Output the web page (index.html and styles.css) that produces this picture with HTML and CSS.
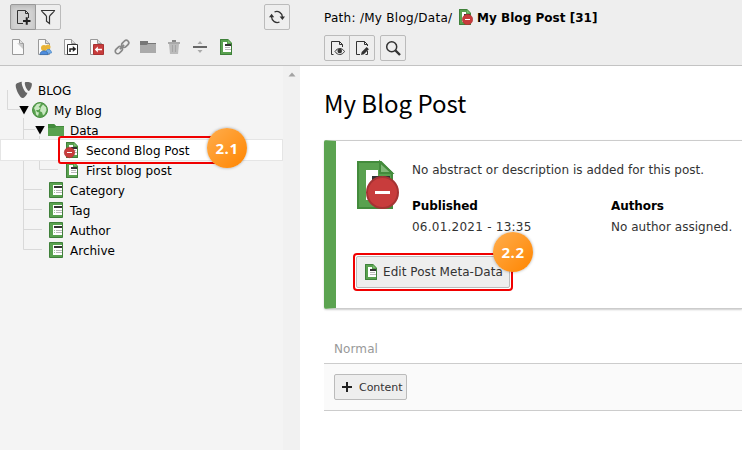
FILE: index.html
```html
<!DOCTYPE html>
<html lang="en">
<head>
<meta charset="utf-8">
<title>My Blog Post</title>
<link rel="stylesheet" href="styles.css">
</head>
<body>
<svg class="defs" width="0" height="0">
  <defs>
    <symbol id="post" viewBox="0 0 16 16">
      <path fill="#59a14f" d="M2 0h8l4 4v12H2z"/>
      <path fill="none" stroke="#3f803a" d="M2.500.5h7.300l3.700 3.700v11.300h-11z"/>
      <path fill="#7dbd72" d="M10 1v3h3z"/>
      <path fill="#fff" d="M5 3h4v2h4v8H5z"/>
      <path fill="#333" d="M7 5h6v2H7z"/>
      <path fill="#b9b9b9" d="M7 8h5v1H7zM7 10h6v1H7z"/>
    </symbol>
    <symbol id="list" viewBox="0 0 16 16">
      <path fill="#59a14f" stroke="#3f803a" d="M1.500.5h13v15h-13z"/>
      <path fill="#fff" d="M5 3h9v10H5z"/>
      <path fill="#333" d="M6 4h8v2H6z"/>
      <path fill="#b9b9b9" d="M8 8h6v1H8zM8 10h6v1H8z"/>
      <path fill="#9cc796" d="M6 8h1v1H6zM6 10h1v1H6z"/>
    </symbol>
    <symbol id="hidden-post" viewBox="0 0 16 16">
      <use href="#post" width="16" height="16"/>
      <circle cx="10.500" cy="10.500" r="5.200" fill="#c83c3c" stroke="#a33"  stroke-width=".6"/>
      <path fill="#fff" d="M8 10h5v1H8z"/>
    </symbol>
    <symbol id="sheet" viewBox="0 0 16 16">
      <path fill="#fafafa" stroke="#999" d="M2.500.5h7l4 4v11h-11z"/>
      <path fill="#ddd" stroke="#999" d="M9.500.5v4h4"/>
    </symbol>
  </defs>
</svg>
<div class="app">
  <aside class="side">
    <header class="bar">
      <div class="bar-row">
        <div class="group">
          <button class="btn active"><svg width="16" height="16" viewBox="0 0 16 16"><path fill="none" stroke="#333" d="M8 14.500H2.500v-13h8l3 3V9M10.500 1.500v3h3"/><path stroke="#222" stroke-width="2" d="M8 12h7.500M11.750 8.200v7.600"/></svg></button>
          <button class="btn"><svg width="16" height="16" viewBox="0 0 16 16"><path fill="none" stroke="#333" stroke-width="1.200" d="M1.500 1.500h13c0 1.500-5 4.500-5 6v7l-3-2.200V7.500c0-1.500-5-4.500-5-6z"/></svg></button>
        </div>
        <button class="btn"><svg width="16" height="16" viewBox="0 0 16 16"><path fill="none" stroke="#333" stroke-width="1.300" d="M5.500 3A5.600 5.600 0 0 1 13.400 8M10.500 13A5.600 5.600 0 0 1 2.600 8"/><path fill="#333" d="M10.600 7.500H16L13.400 11zM0 8.300h5.200L2.600 4.800z"/></svg></button>
      </div>
      <div class="tools">
        <svg viewBox="0 0 16 16"><use href="#sheet"/><path fill="#ccc" d="M7 4l6 6V5z"/></svg>
        <svg viewBox="0 0 16 16"><use href="#sheet"/><circle cx="12" cy="8" r="2.500" fill="#e8b63c"/><path fill="#76aee8" stroke="#3979bd" stroke-width=".6" d="M9 15c0-6 6.500-6 6.500-1z"/><circle cx="8" cy="9" r="3" fill="#e9b436"/><path fill="#4f8dde" stroke="#2f68ae" stroke-width=".7" d="M4 15.600c0-5 8-5 8 0z"/></svg>
        <svg viewBox="0 0 16 16"><use href="#sheet"/><path fill="#fff" stroke="#333" d="M5.500 5.500h10v10h-10z"/><path fill="none" stroke="#222" stroke-width="1.500" d="M8 13v-3h4"/><path fill="#222" d="M10.800 7v6l3.500-3z"/></svg>
        <svg viewBox="0 0 16 16"><use href="#sheet"/><path fill="#c83c3c" stroke="#a93232" d="M5.500 5.500h10v10h-10z"/><path fill="#fff" d="M6.800 10.500l3-3v2.300h4.200v1.400H9.800v2.300z"/></svg>
        <svg viewBox="0 0 16 16"><g fill="none" stroke="#888" stroke-width="1.700" transform="rotate(-45 8 8)"><rect x="-.5" y="5.500" width="8" height="5" rx="2.500"/><rect x="8.500" y="5.500" width="8" height="5" rx="2.500"/><path d="M5 8h6"/></g></svg>
        <svg viewBox="0 0 16 16"><path fill="#aaa" d="M0 2h8v2h8v10H0z"/><path fill="#777" d="M0 2h8v2h8v1H8L6.500 6H0z"/></svg>
        <svg viewBox="0 0 16 16"><path fill="#bbb" d="M3 5h10l-1 10H4z"/><path fill="#aaa" d="M2 3h12v2H2z"/><path fill="#888" d="M6 1h4v2H6z"/><path stroke="#a5a5a5" d="M6.500 6v7M9.500 6v7"/></svg>
        <svg viewBox="0 0 16 16"><path fill="#666" d="M1 7h14v2H1z"/><path fill="#aaa" d="M5.500 5L8 2l2.500 3zM5.500 11L8 14l2.500-3z"/></svg>
        <svg viewBox="0 0 16 16"><use href="#post"/></svg>
      </div>
    </header>
    <div class="side-body">
      <nav class="tree">
        <svg class="lines" width="60" height="190" fill="none" stroke="#d9d9d9"><path d="M7.500 20v19.500H20M23.500 48v131.500H42M23 59.500h12M23 119.500h19M23 139.500h19M23 159.500h19M39.500 66v33.500H58M39 79.500h19"/></svg>
        <div class="row l0"><svg viewBox="0 0 16 16"><path fill="#666" d="M11.500 10.700c-.3.100-.5.100-.7.100-2.100 0-5.100-7.300-5.100-9.700 0-.9.200-1.200.5-1.400C3.600 0 .8.900 0 2.200c-.2.300-.3.700-.3 1.200C-.3 7.200 3.800 16 6.700 16c1.400 0 3.600-2.200 4.800-5.300M10.400 0c2.700 0 5.500.4 5.500 2 0 3.100-2 6.900-3 6.900-1.800 0-4.100-5.100-4.100-7.600 0-1.100.4-1.300 1.600-1.300"/></svg><span>BLOG</span></div>
        <div class="row l1"><i class="caret"></i><svg viewBox="0 0 16 16"><circle cx="8" cy="8" r="7.500" fill="#59a14f" stroke="#488f40"/><path fill="#c9e8c1" d="M2 6l3-4 4-.7-1 2.200L6.500 5l2 1-2 2H4l1 2 2 .5L6 14 4 12.500 3.500 9zM9 5l2-2.500 3 2.700.5 3-2 4-1.500 1-1-3-2-1 .5-2.500z"/></svg><span>My Blog</span></div>
        <div class="row l2"><i class="caret"></i><svg viewBox="0 0 16 16"><path fill="#59a14f" d="M0 2h6l2 2h8v10H0z"/><path fill="#438b3c" d="M0 2h6l2 2h8v1H8L6.500 6H0z"/></svg><span>Data</span></div>
        <div class="row l3 selected"><svg viewBox="0 0 16 16"><use href="#post"/><circle cx="5.500" cy="10.500" r="5.200" fill="#c83c3c" stroke="#a33" stroke-width=".6"/><path fill="#fff" d="M3 10h5v1H3z"/></svg><span>Second Blog Post</span>
          <div class="mark mark-tree"><b class="badge">2.1</b></div>
        </div>
        <div class="row l3"><svg viewBox="0 0 16 16"><use href="#post"/></svg><span class="wide">First blog post</span></div>
        <div class="row l4"><svg viewBox="0 0 16 16"><use href="#list"/></svg><span>Category</span></div>
        <div class="row l4"><svg viewBox="0 0 16 16"><use href="#list"/></svg><span>Tag</span></div>
        <div class="row l4"><svg viewBox="0 0 16 16"><use href="#list"/></svg><span>Author</span></div>
        <div class="row l4"><svg viewBox="0 0 16 16"><use href="#list"/></svg><span>Archive</span></div>
      </nav>
      <div class="scroll"><svg width="8" height="5" viewBox="0 0 8 5"><path fill="#a3a3a3" d="M.5 4.500L4 .5l3.500 4z"/></svg></div>
    </div>
  </aside>
  <main class="main">
    <header class="bar doc">
      <div class="path"><span class="crumb">Path: /My Blog/Data/</span><svg viewBox="0 0 16 16"><use href="#hidden-post"/></svg><strong>My Blog Post [31]</strong></div>
      <div class="actions">
        <div class="group">
          <button class="btn"><svg width="16" height="16" viewBox="0 0 16 16"><path fill="none" stroke="#333" d="M4.500 14.500h-2v-13h8l3 3v2.500M10.500 1.500v3h3"/><path fill="#eee" stroke="#333" d="M6 11.500c2.500-4 7-4 9.500 0-2.500 4-7 4-9.500 0z"/><circle cx="10.750" cy="11" r="2.300" fill="#333"/></svg></button>
          <button class="btn"><svg width="16" height="16" viewBox="0 0 16 16"><path fill="none" stroke="#333" d="M6 14.500H2.500v-13h8l3 3v1.500M10.500 1.500v3h3M13.500 11v3.500h-2"/><path fill="#333" d="M7 15l.7-3 5-5 2.200 2.200-5 5z"/></svg></button>
        </div>
        <button class="btn"><svg width="16" height="16" viewBox="0 0 16 16"><circle cx="6.700" cy="6.700" r="5" fill="none" stroke="#333" stroke-width="1.500"/><path stroke="#333" stroke-width="2.400" d="M10.500 10.500l4.500 4.500"/></svg></button>
      </div>
    </header>
    <section class="content">
      <h1>My Blog Post</h1>
      <article class="card">
        <div class="info">
          <svg class="big" viewBox="0 0 48 48"><path fill="#59a14f" stroke="#438b3c" stroke-width="2" d="M7 1h23l11 11v35H7z"/><path fill="#fff" d="M15 9h12v6h12v24H15z"/><path fill="#333" d="M21 15h18v5H21z"/><path fill="#80b978" stroke="#438b3c" stroke-width="2" d="M29 1v11h12z"/><circle cx="31.500" cy="31.500" r="15.500" fill="#c83c3c" stroke="#a53333" stroke-width="2"/><path fill="#fff" d="M24 30h15v3H24z"/></svg>
          <div class="facts">
            <p class="abstract">No abstract or description is added for this post.</p>
            <dl><div><dt>Published</dt><dd class="date">06.01.2021 - 13:35</dd></div><div><dt>Authors</dt><dd>No author assigned.</dd></div></dl>
          </div>
        </div>
        <div class="edit-wrap">
          <button class="edit"><svg width="16" height="16" viewBox="0 0 16 16"><use href="#post"/></svg><span>Edit Post Meta-Data</span></button>
          <b class="badge">2.2</b>
        </div>
      </article>
      <div class="column-title">Normal</div>
      <div class="column-body"><button class="add"><svg width="10" height="10" viewBox="0 0 10 10"><path fill="#222" d="M4 0h2v4h4v2H6v4H4V6H0V4h4z"/></svg><span>Content</span></button></div>
    </section>
  </main>
</div>
</body>
</html>
```
FILE: styles.css
```css
* { box-sizing: border-box; }
body { margin: 0; width: 742px; height: 450px; overflow: hidden; background: #fff; color: #000; font: 12px/20px Verdana, "DejaVu Sans", sans-serif; letter-spacing: .03px; }
.defs { position: absolute; }
button { font: inherit; letter-spacing: inherit; color: #333; padding: 0; margin: 0; }
svg { display: block; flex: none; overflow: visible; }
.app { display: flex; height: 450px; }
.side { width: 300px; display: flex; flex-direction: column; }
.main { flex: 1; min-width: 0; }
.bar { height: 66px; background: #eee; border-bottom: 1px solid #c3c3c3; padding: 4px 10px 0; }
.bar-row { display: flex; justify-content: space-between; }
.group { display: flex; }
.btn { width: 26px; height: 26px; display: grid; place-items: center; background: #eee; border: 1px solid #bbb; border-radius: 2px; }
.group .btn + .btn { margin-left: -1px; border-radius: 0 2px 2px 0; }
.group .btn:first-child { border-radius: 2px 0 0 2px; }
.group .btn.active { position: relative; background: #d2d2d2; border-color: #999; box-shadow: inset 0 2px 4px rgba(0,0,0,.12); }
.tools { display: flex; gap: 10px; margin-top: 9px; }
.tools svg { width: 16px; height: 16px; }
.side-body { flex: 1; display: flex; background: #f4f4f4; }
.tree { position: relative; flex: 1; padding-top: 14px; }
.lines { position: absolute; left: 0; top: 4px; }
.row { position: relative; display: flex; align-items: center; height: 20px; white-space: nowrap; letter-spacing: 0; }
.row > svg { width: 16px; height: 16px; margin-right: 6px; }
.row > span { padding-top: 2px; }
.wide { letter-spacing: .07px; }
.l0 { padding-left: 16px; }
.l1 { padding-left: 19px; }
.l2 { padding-left: 35px; }
.l3 { padding-left: 64px; }
.l4 { padding-left: 48px; }
.caret { width: 10px; height: 9px; margin-right: 3px; background: #000; clip-path: polygon(0 0, 100% 0, 50% 100%); }
.selected { background: #fff; box-shadow: 0 0 0 1px #e5e5e5; margin: 0 1px 0 1px; padding-left: 63px; z-index: 1; }
.mark { position: absolute; left: 57px; top: -4px; width: 170px; height: 28px; border: 2px solid #f00000; border-radius: 3px; }
.mark-tree .badge { right: -21px; top: -10px; }
.badge { position: absolute; width: 40px; height: 40px; border-radius: 50%; background: linear-gradient(135deg, #ffad4d, #ff8500); color: #fff; font: 700 15px/40px "Open Sans", sans-serif; letter-spacing: .6px; text-align: center; box-shadow: 0 0 3px rgba(0,0,0,.35); }
.scroll { width: 17px; background: #f1f1f1; padding: 6px 0 0 5px; }
.doc { padding: 7px 0 0 24px; }
.path { display: flex; height: 20px; align-items: center; white-space: nowrap; letter-spacing: .03px; }
.path span, .path strong { padding-top: 1px; }
.crumb { width: 133px; letter-spacing: .28px; }
.path svg { width: 16px; height: 16px; margin-right: 4px; }
.actions { display: flex; gap: 5px; margin-top: 8px; }
.content { padding-left: 24px; }
h1 { margin: 18px 0 0; height: 40px; font: 400 24px/38px "Noto Sans CJK SC", sans-serif; letter-spacing: 0; }
.card { margin-top: 16px; height: 169px; border: 1px solid #ccc; border-right: 0; border-left: 12px solid #5ba350; border-radius: 2px 0 0 2px; padding: 20px 0 0 17px; box-shadow: 0 1px 2px rgba(0,0,0,.2); }
.info { display: flex; height: 92px; }
.big { width: 48px; height: 48px; margin-right: 13px; margin-left: -2px; }
.facts { flex: 1; color: #333; white-space: nowrap; }
.facts p, dl, dd { margin: 0; }
.facts .abstract { margin-top: -1px; }
dl { display: grid; grid-template-columns: 199px 1fr; margin-top: 16px; }
dt { font-weight: 700; color: #000; letter-spacing: -.08px; }
dd { line-height: 22px; }
.date { letter-spacing: .24px; }
.edit-wrap { position: relative; width: 160px; height: 38px; border: 2px solid #f00000; border-radius: 4px; padding: 1px; }
.edit { display: flex; align-items: center; width: 154px; height: 32px; padding-left: 6px; gap: 4px; background: #eee; border: 1px solid #bbb; border-radius: 2px; white-space: nowrap; letter-spacing: .06px; }
.edit-wrap .badge { left: 138px; top: -23px; }
.column-title { height: 54px; padding: 30px 0 0 10px; color: #999; letter-spacing: .1px; }
.column-body { height: 48px; background: #fafafa; border: solid #ccc; border-width: 1px 0; padding: 10px; }
.add { display: flex; align-items: center; gap: 7px; width: 73px; height: 26px; padding-left: 7px; background: #eee; border: 1px solid #bbb; border-radius: 2px; font-size: 11px; letter-spacing: -.05px; }
.add span { padding-top: 1px; }
```
